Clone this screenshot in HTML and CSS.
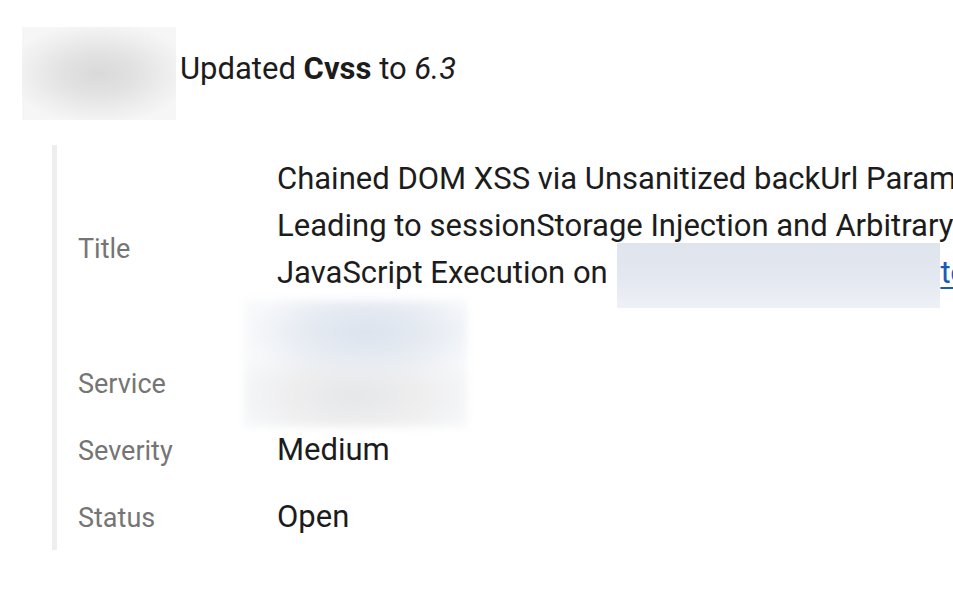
FILE: index.html
```html
<!DOCTYPE html>
<html lang="en">
<head>
<meta charset="utf-8">
<title>Activity</title>
<link rel="stylesheet" href="styles.css">
</head>
<body>
<div class="event">
  <div class="event-head">
    <div class="avatar"></div>
    <div class="summary">Updated <strong>Cvss</strong> to <em>6.3</em></div>
  </div>
  <div class="details">
    <div class="row">
      <div class="label">Title</div>
      <div class="value title-value">Chained DOM XSS via Unsanitized backUrl Parameter<br>Leading to sessionStorage Injection and Arbitrary<br>JavaScript Execution on <a class="link" href="#"><span class="masked"></span>to</a></div>
    </div>
    <div class="row">
      <div class="label">Service</div>
      <div class="value service-value"><span class="masked-block"></span>&nbsp;</div>
    </div>
    <div class="row">
      <div class="label">Severity</div>
      <div class="value">Medium</div>
    </div>
    <div class="row">
      <div class="label">Status</div>
      <div class="value">Open</div>
    </div>
  </div>
</div>
</body>
</html>
```
FILE: styles.css
```css
html, body {
  margin: 0;
  padding: 0;
  background: #ffffff;
  overflow: hidden;
}

body {
  font-family: Roboto, "Noto Sans", "Liberation Sans", sans-serif;
  color: #1c1c1c;
  width: 953px;
  height: 589px;
}

.event {
  padding: 27px 0 0 22px;
}

.event-head {
  display: flex;
  align-items: center;
  gap: 4px;
}

.avatar {
  width: 154px;
  height: 93px;
  background: radial-gradient(ellipse 60% 55% at 50% 50%, #d9d9d9 0%, #e2e2e2 40%, #eeeeee 75%, #f6f6f6 100%);
}

.summary {
  font-size: 31px;
  line-height: 36px;
  padding-bottom: 9px;
  white-space: nowrap;
}

.summary strong {
  font-weight: 700;
}

.details {
  margin: 25px 0 0 30px;
  border-left: 5px solid #eeeeee;
  padding-left: 21px;
  width: 2000px;
}

.row {
  display: grid;
  grid-template-columns: 199px 1fr;
  align-items: center;
  padding: 10px 0;
}

.label {
  font-size: 27px;
  color: #757575;
  padding-top: 3px;
}

.value {
  font-size: 31px;
  line-height: 47px;
  white-space: nowrap;
}

.title-value {
  padding-bottom: 43px;
}

.link {
  color: #1a5bb5;
  text-decoration: underline;
  text-decoration-thickness: 2px;
  text-underline-offset: 4px;
}

.masked {
  display: inline-block;
  width: 323px;
  height: 0;
  margin-left: 2px;
  position: relative;
}

.masked::before {
  content: "";
  position: absolute;
  left: 0;
  top: -40px;
  width: 323px;
  height: 65px;
  background: linear-gradient(180deg, #dfe4ed 0%, #e4e8f0 55%, #eef1f6 100%);
}

.service-value {
  position: relative;
}

.masked-block {
  position: absolute;
  left: -33px;
  top: -59px;
  width: 223px;
  height: 127px;
  background: radial-gradient(ellipse 55% 40% at 55% 25%, #dce3ee 0%, #e6ebf2 50%, rgba(240,242,246,0) 100%),
              radial-gradient(ellipse 60% 45% at 50% 75%, #e6e7e9 0%, #eeeeef 50%, rgba(248,248,248,0) 100%),
              #f8f9fb;
  filter: blur(4px);
}
```
